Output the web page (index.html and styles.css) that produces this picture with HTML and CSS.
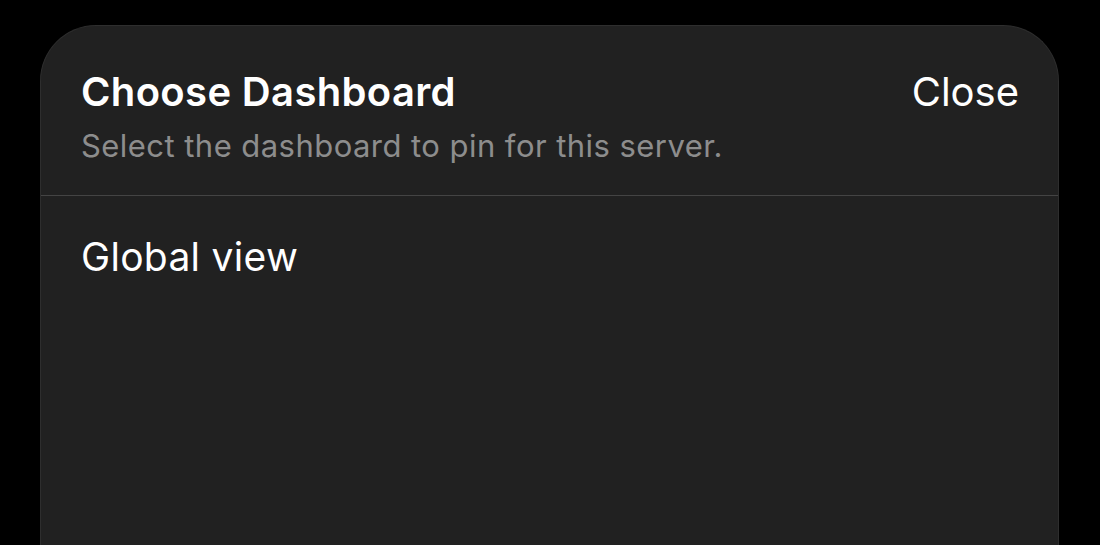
FILE: index.html
```html
<!DOCTYPE html>
<html>
<head>
<meta charset="utf-8">
<link rel="stylesheet" href="styles.css">
</head>
<body>
<div class="sheet">
  <div class="header">
    <div class="titles">
      <div class="title">Choose Dashboard</div>
      <div class="subtitle">Select the dashboard to pin for this server.</div>
    </div>
    <div class="close">Close</div>
  </div>
  <div class="list">
    <div class="item">Global view</div>
  </div>
</div>
</body>
</html>
```
FILE: styles.css
```css
html, body {
  margin: 0;
  padding: 0;
  background: #000;
  height: 100%;
  overflow: hidden;
}
body {
  font-family: Inter, "Noto Sans", sans-serif;
  color: #fff;
}
.sheet {
  margin: 25px 0 0 40px;
  width: 1019px;
  height: 520px;
  box-sizing: border-box;
  background: #212121;
  border: 1px solid #2e2e2e;
  border-bottom: none;
  border-radius: 56px 56px 0 0;
}
.header {
  display: flex;
  justify-content: space-between;
  align-items: flex-start;
  padding: 42px 39px 0 40px;
  height: 170px;
  box-sizing: border-box;
  border-bottom: 1px solid #444;
}
.title {
  font-size: 40px;
  font-weight: 600;
  line-height: 48px;
  letter-spacing: 0.35px;
}
.subtitle {
  margin-top: 12px;
  font-size: 31px;
  line-height: 36px;
  letter-spacing: 0.45px;
  color: #8d8d8d;
}
.close {
  font-size: 40px;
  line-height: 48px;
}
.list {
  padding: 38px 40px 0 40px;
}
.item {
  font-size: 39px;
  line-height: 46px;
  letter-spacing: 0.3px;
}
```
